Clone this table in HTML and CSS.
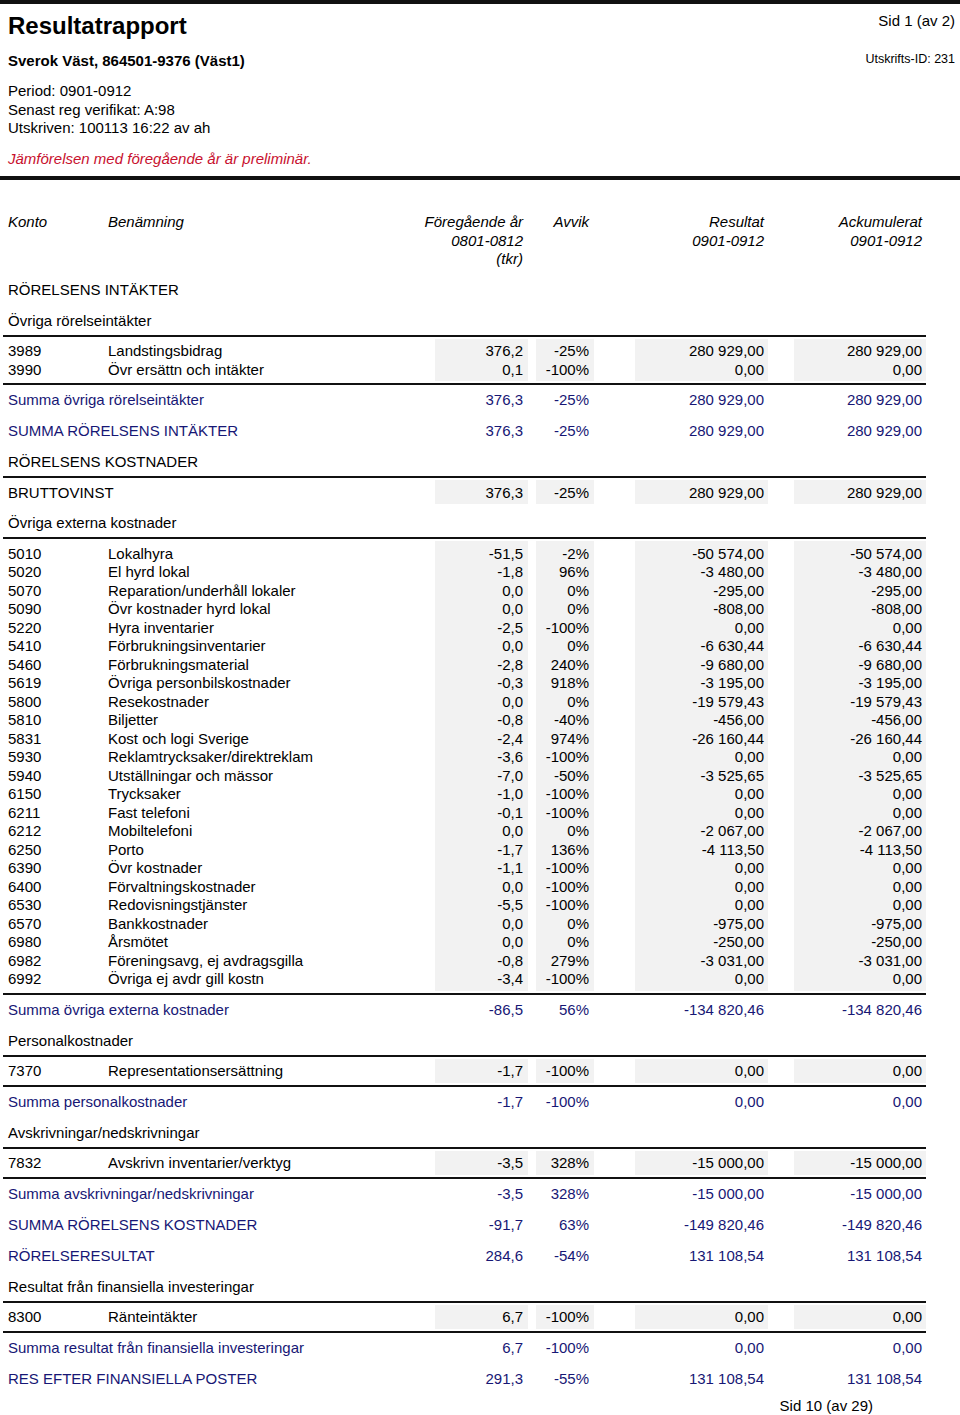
FILE: index.html
```html
<!DOCTYPE html>
<html lang="sv">
<head>
<meta charset="utf-8">
<title>Resultatrapport</title>
<link rel="stylesheet" href="styles.css">
</head>
<body>
<header class="page-head">
  <div class="head-row">
    <h1 class="title">Resultatrapport</h1>
    <div class="sid">Sid 1 (av 2)</div>
  </div>
  <div class="head-row head-row2">
    <div class="org">Sverok Väst, 864501-9376 (Väst1)</div>
    <div class="printid">Utskrifts-ID: 231</div>
  </div>
  <div class="meta">
    <div>Period: 0901-0912</div>
    <div>Senast reg verifikat: A:98</div>
    <div>Utskriven: 100113 16:22 av ah</div>
  </div>
  <div class="prelim">Jämförelsen med föregående år är preliminär.</div>
</header>

<main class="report">
  <div class="cols colhead">
    <div class="c-konto">Konto</div>
    <div class="c-name">Benämning</div>
    <div class="c-prev"><span>Föregående år</span><span>0801-0812</span><span>(tkr)</span></div>
    <div class="c-avv"><span>Avvik</span></div>
    <div class="c-res"><span>Resultat</span><span>0901-0912</span></div>
    <div class="c-ack"><span>Ackumulerat</span><span>0901-0912</span></div>
  </div>

  <div class="lbl">RÖRELSENS INTÄKTER</div>
  <div class="lbl rule">Övriga rörelseintäkter</div>
  <div class="grp rule">
    <div class="grp-body">
      <div class="cols"><div class="c-konto">3989</div><div class="c-name">Landstingsbidrag</div><div class="c-prev">376,2</div><div class="c-avv">-25%</div><div class="c-res">280 929,00</div><div class="c-ack">280 929,00</div></div>
      <div class="cols"><div class="c-konto">3990</div><div class="c-name">Övr ersättn och intäkter</div><div class="c-prev">0,1</div><div class="c-avv">-100%</div><div class="c-res">0,00</div><div class="c-ack">0,00</div></div>
    </div>
  </div>
  <div class="cols sum"><div class="c-label">Summa övriga rörelseintäkter</div><div class="c-prev">376,3</div><div class="c-avv">-25%</div><div class="c-res">280 929,00</div><div class="c-ack">280 929,00</div></div>
  <div class="cols sum"><div class="c-label">SUMMA RÖRELSENS INTÄKTER</div><div class="c-prev">376,3</div><div class="c-avv">-25%</div><div class="c-res">280 929,00</div><div class="c-ack">280 929,00</div></div>

  <div class="lbl rule">RÖRELSENS KOSTNADER</div>
  <div class="grp">
    <div class="grp-body">
      <div class="cols"><div class="c-label">BRUTTOVINST</div><div class="c-prev">376,3</div><div class="c-avv">-25%</div><div class="c-res">280 929,00</div><div class="c-ack">280 929,00</div></div>
    </div>
  </div>

  <div class="lbl rule">Övriga externa kostnader</div>
  <div class="grp rule">
    <div class="grp-body">
      <div class="cols"><div class="c-konto">5010</div><div class="c-name">Lokalhyra</div><div class="c-prev">-51,5</div><div class="c-avv">-2%</div><div class="c-res">-50 574,00</div><div class="c-ack">-50 574,00</div></div>
      <div class="cols"><div class="c-konto">5020</div><div class="c-name">El hyrd lokal</div><div class="c-prev">-1,8</div><div class="c-avv">96%</div><div class="c-res">-3 480,00</div><div class="c-ack">-3 480,00</div></div>
      <div class="cols"><div class="c-konto">5070</div><div class="c-name">Reparation/underhåll lokaler</div><div class="c-prev">0,0</div><div class="c-avv">0%</div><div class="c-res">-295,00</div><div class="c-ack">-295,00</div></div>
      <div class="cols"><div class="c-konto">5090</div><div class="c-name">Övr kostnader hyrd lokal</div><div class="c-prev">0,0</div><div class="c-avv">0%</div><div class="c-res">-808,00</div><div class="c-ack">-808,00</div></div>
      <div class="cols"><div class="c-konto">5220</div><div class="c-name">Hyra inventarier</div><div class="c-prev">-2,5</div><div class="c-avv">-100%</div><div class="c-res">0,00</div><div class="c-ack">0,00</div></div>
      <div class="cols"><div class="c-konto">5410</div><div class="c-name">Förbrukningsinventarier</div><div class="c-prev">0,0</div><div class="c-avv">0%</div><div class="c-res">-6 630,44</div><div class="c-ack">-6 630,44</div></div>
      <div class="cols"><div class="c-konto">5460</div><div class="c-name">Förbrukningsmaterial</div><div class="c-prev">-2,8</div><div class="c-avv">240%</div><div class="c-res">-9 680,00</div><div class="c-ack">-9 680,00</div></div>
      <div class="cols"><div class="c-konto">5619</div><div class="c-name">Övriga personbilskostnader</div><div class="c-prev">-0,3</div><div class="c-avv">918%</div><div class="c-res">-3 195,00</div><div class="c-ack">-3 195,00</div></div>
      <div class="cols"><div class="c-konto">5800</div><div class="c-name">Resekostnader</div><div class="c-prev">0,0</div><div class="c-avv">0%</div><div class="c-res">-19 579,43</div><div class="c-ack">-19 579,43</div></div>
      <div class="cols"><div class="c-konto">5810</div><div class="c-name">Biljetter</div><div class="c-prev">-0,8</div><div class="c-avv">-40%</div><div class="c-res">-456,00</div><div class="c-ack">-456,00</div></div>
      <div class="cols"><div class="c-konto">5831</div><div class="c-name">Kost och logi Sverige</div><div class="c-prev">-2,4</div><div class="c-avv">974%</div><div class="c-res">-26 160,44</div><div class="c-ack">-26 160,44</div></div>
      <div class="cols"><div class="c-konto">5930</div><div class="c-name">Reklamtrycksaker/direktreklam</div><div class="c-prev">-3,6</div><div class="c-avv">-100%</div><div class="c-res">0,00</div><div class="c-ack">0,00</div></div>
      <div class="cols"><div class="c-konto">5940</div><div class="c-name">Utställningar och mässor</div><div class="c-prev">-7,0</div><div class="c-avv">-50%</div><div class="c-res">-3 525,65</div><div class="c-ack">-3 525,65</div></div>
      <div class="cols"><div class="c-konto">6150</div><div class="c-name">Trycksaker</div><div class="c-prev">-1,0</div><div class="c-avv">-100%</div><div class="c-res">0,00</div><div class="c-ack">0,00</div></div>
      <div class="cols"><div class="c-konto">6211</div><div class="c-name">Fast telefoni</div><div class="c-prev">-0,1</div><div class="c-avv">-100%</div><div class="c-res">0,00</div><div class="c-ack">0,00</div></div>
      <div class="cols"><div class="c-konto">6212</div><div class="c-name">Mobiltelefoni</div><div class="c-prev">0,0</div><div class="c-avv">0%</div><div class="c-res">-2 067,00</div><div class="c-ack">-2 067,00</div></div>
      <div class="cols"><div class="c-konto">6250</div><div class="c-name">Porto</div><div class="c-prev">-1,7</div><div class="c-avv">136%</div><div class="c-res">-4 113,50</div><div class="c-ack">-4 113,50</div></div>
      <div class="cols"><div class="c-konto">6390</div><div class="c-name">Övr kostnader</div><div class="c-prev">-1,1</div><div class="c-avv">-100%</div><div class="c-res">0,00</div><div class="c-ack">0,00</div></div>
      <div class="cols"><div class="c-konto">6400</div><div class="c-name">Förvaltningskostnader</div><div class="c-prev">0,0</div><div class="c-avv">-100%</div><div class="c-res">0,00</div><div class="c-ack">0,00</div></div>
      <div class="cols"><div class="c-konto">6530</div><div class="c-name">Redovisningstjänster</div><div class="c-prev">-5,5</div><div class="c-avv">-100%</div><div class="c-res">0,00</div><div class="c-ack">0,00</div></div>
      <div class="cols"><div class="c-konto">6570</div><div class="c-name">Bankkostnader</div><div class="c-prev">0,0</div><div class="c-avv">0%</div><div class="c-res">-975,00</div><div class="c-ack">-975,00</div></div>
      <div class="cols"><div class="c-konto">6980</div><div class="c-name">Årsmötet</div><div class="c-prev">0,0</div><div class="c-avv">0%</div><div class="c-res">-250,00</div><div class="c-ack">-250,00</div></div>
      <div class="cols"><div class="c-konto">6982</div><div class="c-name">Föreningsavg, ej avdragsgilla</div><div class="c-prev">-0,8</div><div class="c-avv">279%</div><div class="c-res">-3 031,00</div><div class="c-ack">-3 031,00</div></div>
      <div class="cols"><div class="c-konto">6992</div><div class="c-name">Övriga ej avdr gill kostn</div><div class="c-prev">-3,4</div><div class="c-avv">-100%</div><div class="c-res">0,00</div><div class="c-ack">0,00</div></div>
    </div>
  </div>
  <div class="cols sum"><div class="c-label">Summa övriga externa kostnader</div><div class="c-prev">-86,5</div><div class="c-avv">56%</div><div class="c-res">-134 820,46</div><div class="c-ack">-134 820,46</div></div>

  <div class="lbl rule">Personalkostnader</div>
  <div class="grp rule">
    <div class="grp-body">
      <div class="cols"><div class="c-konto">7370</div><div class="c-name">Representationsersättning</div><div class="c-prev">-1,7</div><div class="c-avv">-100%</div><div class="c-res">0,00</div><div class="c-ack">0,00</div></div>
    </div>
  </div>
  <div class="cols sum"><div class="c-label">Summa personalkostnader</div><div class="c-prev">-1,7</div><div class="c-avv">-100%</div><div class="c-res">0,00</div><div class="c-ack">0,00</div></div>

  <div class="lbl rule">Avskrivningar/nedskrivningar</div>
  <div class="grp rule">
    <div class="grp-body">
      <div class="cols"><div class="c-konto">7832</div><div class="c-name">Avskrivn inventarier/verktyg</div><div class="c-prev">-3,5</div><div class="c-avv">328%</div><div class="c-res">-15 000,00</div><div class="c-ack">-15 000,00</div></div>
    </div>
  </div>
  <div class="cols sum"><div class="c-label">Summa avskrivningar/nedskrivningar</div><div class="c-prev">-3,5</div><div class="c-avv">328%</div><div class="c-res">-15 000,00</div><div class="c-ack">-15 000,00</div></div>
  <div class="cols sum"><div class="c-label">SUMMA RÖRELSENS KOSTNADER</div><div class="c-prev">-91,7</div><div class="c-avv">63%</div><div class="c-res">-149 820,46</div><div class="c-ack">-149 820,46</div></div>
  <div class="cols sum"><div class="c-label">RÖRELSERESULTAT</div><div class="c-prev">284,6</div><div class="c-avv">-54%</div><div class="c-res">131 108,54</div><div class="c-ack">131 108,54</div></div>

  <div class="lbl rule">Resultat från finansiella investeringar</div>
  <div class="grp rule">
    <div class="grp-body">
      <div class="cols"><div class="c-konto">8300</div><div class="c-name">Ränteintäkter</div><div class="c-prev">6,7</div><div class="c-avv">-100%</div><div class="c-res">0,00</div><div class="c-ack">0,00</div></div>
    </div>
  </div>
  <div class="cols sum"><div class="c-label">Summa resultat från finansiella investeringar</div><div class="c-prev">6,7</div><div class="c-avv">-100%</div><div class="c-res">0,00</div><div class="c-ack">0,00</div></div>
  <div class="cols sum"><div class="c-label">RES EFTER FINANSIELLA POSTER</div><div class="c-prev">291,3</div><div class="c-avv">-55%</div><div class="c-res">131 108,54</div><div class="c-ack">131 108,54</div></div>
</main>

<footer class="page-foot">Sid 10 (av 29)</footer>
</body>
</html>
```

FILE: styles.css
```css
html, body {
  margin: 0;
  padding: 0;
  background: #fff;
}

body {
  font-family: "Liberation Sans", Arial, sans-serif;
  font-size: 15px;
  line-height: 18.5px;
  color: #000;
}

/* ---------- page header ---------- */
.page-head {
  border-top: 4px solid #111;
  border-bottom: 4px solid #111;
  padding: 8px 5px 8px 8px;
}

.head-row {
  display: flex;
  justify-content: space-between;
  align-items: flex-start;
}

.title {
  margin: 0;
  font-size: 24px;
  font-weight: bold;
  line-height: 28px;
}

.sid {
  line-height: 18.5px;
}

.head-row2 {
  margin-top: 11.5px;
}

.org {
  font-weight: bold;
}

.printid {
  font-size: 12.5px;
  line-height: 15px;
}

.meta {
  margin-top: 12.3px;
  line-height: 18.4px;
}

.prelim {
  margin-top: 12.1px;
  color: #c8102e;
  font-style: italic;
}

/* ---------- report table ---------- */
.report {
  width: 923px;
  margin-left: 3px;
}

.cols {
  display: grid;
  grid-template-columns: 102px 330px 93px 8px 58px 41px 133px 26px 132px;
}

.c-konto { grid-column: 1; padding-left: 5px; }
.c-name { grid-column: 2; padding-left: 3px; white-space: nowrap; }
.c-label { grid-column: 1 / 3; padding-left: 5px; white-space: nowrap; }
.c-prev { grid-column: 3; text-align: right; padding-right: 5px; }
.c-avv { grid-column: 5; text-align: right; padding-right: 5px; }
.c-res { grid-column: 7; text-align: right; padding-right: 4px; }
.c-ack { grid-column: 9; text-align: right; padding-right: 4px; }

.colhead {
  margin-top: 33px;
  padding-bottom: 6px;
  font-style: italic;
}

.colhead .c-prev,
.colhead .c-avv,
.colhead .c-res,
.colhead .c-ack {
  display: flex;
  flex-direction: column;
  align-items: flex-end;
  white-space: nowrap;
}

.lbl {
  padding: 6px 0 4.5px 5px;
  border-bottom: 2px solid transparent;
}

.lbl.rule {
  border-bottom-color: #111;
}

.sum {
  padding: 6px 0 6.5px;
  color: #171775;
}

.grp {
  padding: 2px 0;
  border-bottom: 2px solid transparent;
}

.grp.rule {
  border-bottom-color: #111;
}

.grp-body {
  padding: 3.7px 0 1.8px;
  background: linear-gradient(to right,
    transparent 432px, #f2f2f2 432px, #f2f2f2 525px, transparent 525px,
    transparent 533px, #f2f2f2 533px, #f2f2f2 591px, transparent 591px,
    transparent 632px, #f2f2f2 632px, #f2f2f2 765px, transparent 765px,
    transparent 791px, #f2f2f2 791px, #f2f2f2 923px);
}

/* ---------- footer ---------- */
.page-foot {
  padding: 2.5px 87px 0 0;
  text-align: right;
}
```
